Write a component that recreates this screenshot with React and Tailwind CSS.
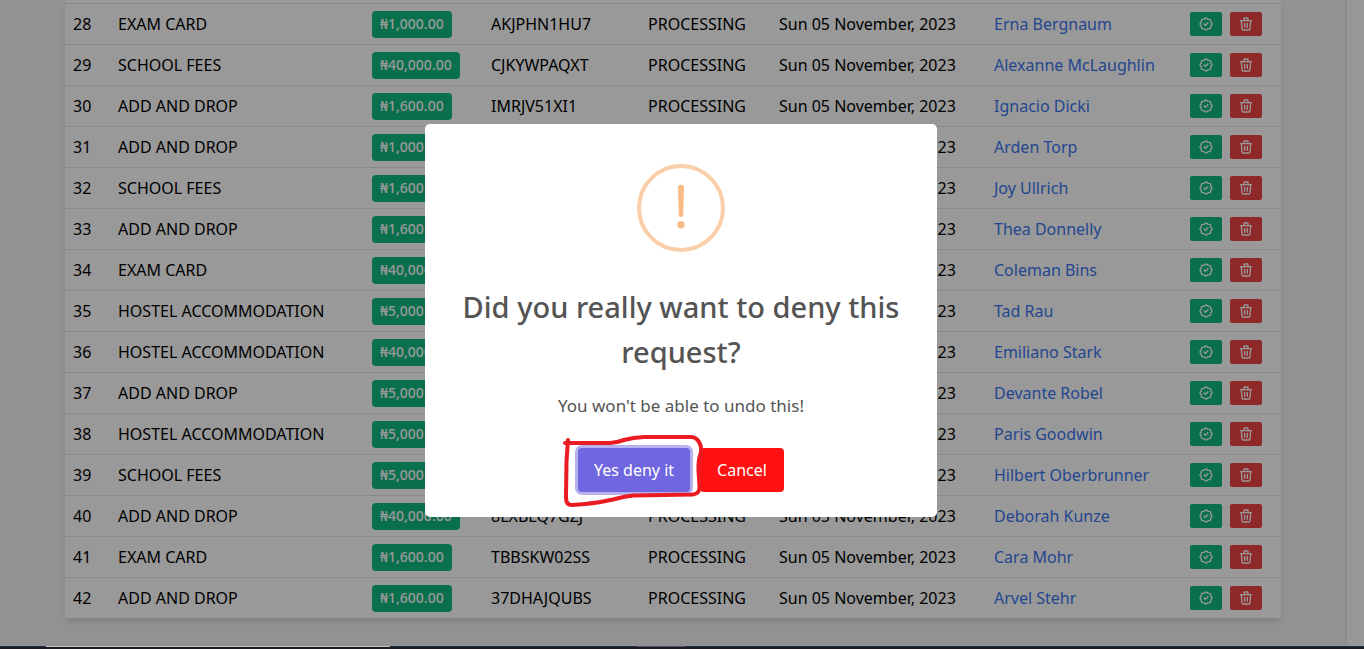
const rows = [
  [28, "EXAM CARD", "1,000.00", "AKJPHN1HU7", "Erna Bergnaum"],
  [29, "SCHOOL FEES", "40,000.00", "CJKYWPAQXT", "Alexanne McLaughlin"],
  [30, "ADD AND DROP", "1,600.00", "IMRJV51XI1", "Ignacio Dicki"],
  [31, "ADD AND DROP", "1,000.00", "", "Arden Torp"],
  [32, "SCHOOL FEES", "1,600.00", "", "Joy Ullrich"],
  [33, "ADD AND DROP", "1,600.00", "", "Thea Donnelly"],
  [34, "EXAM CARD", "40,000.00", "", "Coleman Bins"],
  [35, "HOSTEL ACCOMMODATION", "5,000.00", "", "Tad Rau"],
  [36, "HOSTEL ACCOMMODATION", "40,000.00", "", "Emiliano Stark"],
  [37, "ADD AND DROP", "5,000.00", "", "Devante Robel"],
  [38, "HOSTEL ACCOMMODATION", "5,000.00", "", "Paris Goodwin"],
  [39, "SCHOOL FEES", "5,000.00", "", "Hilbert Oberbrunner"],
  [40, "ADD AND DROP", "40,000.00", "8LXBLQ7GZJ", "Deborah Kunze"],
  [41, "EXAM CARD", "1,600.00", "TBBSKW02SS", "Cara Mohr"],
  [42, "ADD AND DROP", "1,600.00", "37DHAJQUBS", "Arvel Stehr"],
];

function Icon({ children }) {
  return (
    <svg
      viewBox="0 0 24 24"
      className="size-4"
      fill="none"
      stroke="currentColor"
      strokeWidth="2"
      strokeLinecap="round"
      strokeLinejoin="round"
      aria-hidden="true"
    >
      {children}
    </svg>
  );
}

function ApproveIcon() {
  return (
    <Icon>
      <path d="M5 7.2a2.2 2.2 0 0 1 2.2 -2.2h1a2.2 2.2 0 0 0 1.55 -.64l.7 -.7a2.2 2.2 0 0 1 3.12 0l.7 .7c.412 .41 .97 .64 1.55 .64h1a2.2 2.2 0 0 1 2.2 2.2v1c0 .58 .23 1.138 .64 1.55l.7 .7a2.2 2.2 0 0 1 0 3.12l-.7 .7a2.2 2.2 0 0 0 -.64 1.55v1a2.2 2.2 0 0 1 -2.2 2.2h-1a2.2 2.2 0 0 0 -1.55 .64l-.7 .7a2.2 2.2 0 0 1 -3.12 0l-.7 -.7a2.2 2.2 0 0 0 -1.55 -.64h-1a2.2 2.2 0 0 1 -2.2 -2.2v-1a2.2 2.2 0 0 0 -.64 -1.55l-.7 -.7a2.2 2.2 0 0 1 0 -3.12l.7 -.7a2.2 2.2 0 0 0 .64 -1.55v-1" />
      <path d="M9 12l2 2l4 -4" />
    </Icon>
  );
}

function TrashIcon() {
  return (
    <Icon>
      <path d="M4 7h16M10 11v6M14 11v6" />
      <path d="M5 7l1 12a2 2 0 0 0 2 2h8a2 2 0 0 0 2 -2l1 -12" />
      <path d="M9 7v-3a1 1 0 0 1 1 -1h4a1 1 0 0 1 1 1v3" />
    </Icon>
  );
}

function RequestsTable() {
  return (
    <section className="bg-white shadow-md">
      <div className="h-1 border-b border-gray-200" />
      <table className="w-full table-fixed border-separate border-spacing-0 text-left text-base text-black">
        <colgroup>
          <col className="w-[45px]" />
          <col className="w-[254px]" />
          <col className="w-[119px]" />
          <col className="w-[157px]" />
          <col className="w-[131px]" />
          <col className="w-[215px]" />
          <col className="w-[196px]" />
          <col />
        </colgroup>
        <tbody>
          {rows.map(([id, type, amount, code, name]) => (
            <tr key={id} className="h-[41px] *:border-b *:border-gray-200 *:px-2 *:py-0 *:whitespace-nowrap">
              <td>{id}</td>
              <td>{type}</td>
              <td>
                <span className="flex h-[27px] w-fit items-center rounded bg-[#10b981] px-2 text-sm font-medium text-white">
                  ₦{amount}
                </span>
              </td>
              <td>{code}</td>
              <td>PROCESSING</td>
              <td>Sun 05 November, 2023</td>
              <td>
                <a href="#" className="text-[#3b76f0]">{name}</a>
              </td>
              <td>
                <div className="flex gap-2">
                  <button type="button" aria-label={`Approve request ${id}`} className="flex h-6 w-8 items-center justify-center rounded-xs bg-[#10b981] text-white">
                    <ApproveIcon />
                  </button>
                  <button type="button" aria-label={`Deny request ${id}`} className="flex h-6 w-8 items-center justify-center rounded-xs bg-[#ef4444] text-white">
                    <TrashIcon />
                  </button>
                </div>
              </td>
            </tr>
          ))}
        </tbody>
      </table>
    </section>
  );
}

function DenyDialog() {
  return (
    <div className="absolute inset-0 flex items-center justify-center bg-black/40 pr-0.5 pb-[5px]">
      <div
        role="dialog"
        aria-modal="true"
        aria-labelledby="deny-title"
        className="flex w-lg max-w-full flex-col items-center rounded-[5px] bg-white pt-10 pb-[25px] text-center text-[#545454]"
      >
        <svg viewBox="0 0 88 88" className="size-[88px]" aria-hidden="true">
          <circle cx="44" cy="44" r="42" fill="none" stroke="#facea8" strokeWidth="4" />
          <path d="M41 23.5q0-2.7 3-2.7t3 2.7l-.8 27.3q-.2 2.2-2.2 2.2t-2.2-2.2z" fill="#f8bb86" />
          <circle cx="44" cy="60.8" r="3.7" fill="#f8bb86" />
        </svg>
        <h2 id="deny-title" className="mt-8 px-4 text-[29px] leading-[45px] font-medium">
          Did you really want to deny this request?
        </h2>
        <p className="mt-[18px] text-[17px] leading-7">You won't be able to undo this!</p>
        <div className="mt-7 flex gap-2.5">
          <div className="relative">
            <button type="button" className="h-11 w-28 rounded bg-[#7066e0] text-base text-white ring-3 ring-[#7066e0]/50">
              Yes deny it
            </button>
            <svg
              viewBox="0 0 142 76"
              className="pointer-events-none absolute -top-3.5 -left-[15px] z-10 h-[76px] w-[142px] max-w-none"
              fill="none"
              stroke="#ea1b22"
              strokeWidth="4"
              strokeLinecap="round"
              strokeLinejoin="round"
              aria-hidden="true"
            >
              <path d="M2 9H47Q54 8.5 61 6Q70 3.5 81 3H128Q134 3 137 10Q139 14 137.5 20Q135 27 135.5 37L136.5 52Q137 60 130 60.5L71 61.5Q63 62 50 65.5Q30 70 9 71Q3 71 3 64L3.5 27L5 6" />
            </svg>
          </div>
          <button type="button" className="h-11 w-[84px] rounded bg-[#ff1111] text-base text-white">
            Cancel
          </button>
        </div>
      </div>
    </div>
  );
}

export default function App() {
  return (
    <div className="flex min-h-screen flex-col font-['Noto_Sans',sans-serif]">
      <div className="relative flex flex-1">
        <main className="flex-1 bg-[#f3f4f6] pr-16 pb-[27px] pl-[65px]">
          <RequestsTable />
        </main>
        <div className="w-[19px] border-l-2 border-[#e8e9eb] bg-[#fcfcfc]" />
        <DenyDialog />
      </div>
      <footer className="flex h-[3px] flex-col bg-[#1c1c20]">
        <div className="flex h-px bg-[#1f3044]">
          <div className="ml-[46px] w-[344px] bg-[#c4c4c4]" />
          <div className="ml-[247px] w-12 bg-[#4c5866]" />
        </div>
      </footer>
    </div>
  );
}
